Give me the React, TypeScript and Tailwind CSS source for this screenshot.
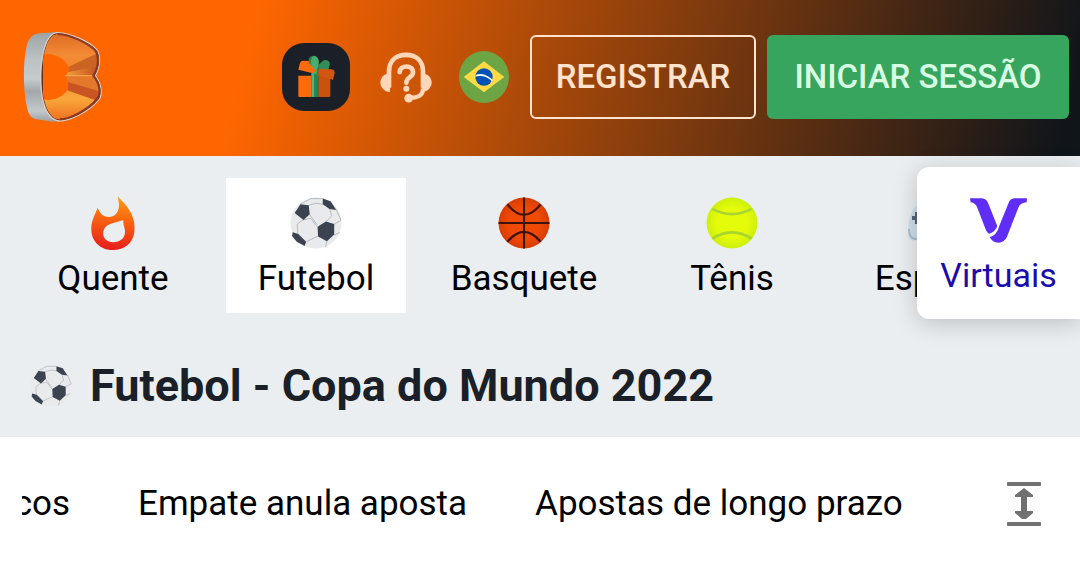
import React from 'react';

function Logo() {
  return (
    <svg viewBox="68 94 242 278" className="w-20 h-[92px]" aria-hidden="true">
      <defs>
        <linearGradient id="metal" x1="0" y1="0" x2="0" y2="1">
          <stop offset="0" stopColor="#9da2a5" />
          <stop offset="0.3" stopColor="#bcc2c4" />
          <stop offset="0.52" stopColor="#c6cccd" />
          <stop offset="0.66" stopColor="#a3a7ab" />
          <stop offset="0.88" stopColor="#c3c8ca" />
          <stop offset="1" stopColor="#9a9ea2" />
        </linearGradient>
        <linearGradient id="face" x1="0" y1="0" x2="0" y2="1">
          <stop offset="0" stopColor="#dd6a26" />
          <stop offset="0.25" stopColor="#f38a34" />
          <stop offset="0.5" stopColor="#ef862e" />
          <stop offset="0.75" stopColor="#f9a83c" />
          <stop offset="1" stopColor="#ef6f1e" />
        </linearGradient>
        <linearGradient id="edge" x1="0" y1="0" x2="1" y2="0">
          <stop offset="0" stopColor="#f39a3a" />
          <stop offset="1" stopColor="#c04c20" />
        </linearGradient>
        <clipPath id="faceClip">
          <path d="M170 103C210 104 262 128 287 150C300 165 300 203 281 228C303 252 306 282 295 298C265 335 210 360 178 362C150 360 126 320 126 240C126 160 142 106 170 103Z" />
        </clipPath>
      </defs>
      <path d="M172 97L120 101C95 104 84 116 78 145C68 190 68 270 80 325C85 348 94 358 110 361L165 369L180 340V120Z" fill="url(#metal)" />
      <path d="M172 97C215 99 270 125 292 148C307 168 303 205 289 229C307 252 312 284 300 302C268 340 212 368 177 368C144 365 120 320 120 240C120 160 138 98 172 97Z" fill="#d9cfca" />
      <path d="M171 101C212 103 265 127 289 150C303 166 301 204 285 229C304 252 308 283 297 300C266 337 210 364 178 364C148 361 124 320 124 240C124 160 142 103 171 101Z" fill="#5b2d20" />
      <g clipPath="url(#faceClip)">
        <path d="M129 100H305V364H129Z" fill="url(#face)" />
        <path d="M205 203L300 158V215L205 220Z" fill="#cb6423" />
        <path d="M203 219L300 200V228L200 229Z" fill="url(#edge)" />
        <path d="M195 230H290L310 305L203 250Z" fill="#e5792b" />
        <path d="M203 248L305 278V310L202 273Z" fill="#c95424" />
        <path d="M129 165C150 159 180 168 196 187C212 205 207 214 198 229C208 248 207 262 198 278C180 298 155 304 132 302C128 265 128 200 129 165Z" fill="#ff6600" />
      </g>
      <path d="M173 103C212 105 260 128 285 151C298 167 298 203 280 229C300 252 304 281 294 297C263 334 208 361 179 361" fill="none" stroke="#8d3823" strokeWidth="6" />
      <path d="M195 229H278" stroke="#ffc162" strokeWidth="2" />
    </svg>
  );
}

function GiftIcon() {
  return (
    <svg viewBox="0 0 204 204" className="w-[68px] h-[68px]" aria-hidden="true">
      <rect width="204" height="204" rx="66" fill="#1b1f27" />
      <path d="M49 98H88V162H52Q49 162 49 158Z" fill="#ff6b0a" />
      <path d="M109 84H145V158Q145 162 141 162H109Z" fill="#c9520c" />
      <path d="M88 86H98V162H88Z" fill="#4bb877" />
      <path d="M98 80H109V162H98Z" fill="#258650" />
      <path d="M49 80L53 63Q55 53 64 53L84 54L101 71L98 92L93 91Z" fill="#ff6b0a" />
      <path d="M80 50Q83 38 96 38Q111 42 109 60L103 75L89 68Q80 62 80 50Z" fill="#258650" />
      <path d="M96 38Q84 46 88 67L101 84L91 92L103 94L110 65Q114 42 96 38Z" fill="#49ad70" />
      <path d="M109 66L125 52Q140 48 144 63L139 80H109Z" fill="#318e59" />
      <path d="M109 77L150 79Q159 82 158 91L153 111L145 108L109 98Z" fill="#d05710" />
    </svg>
  );
}

function SupportIcon() {
  return (
    <svg viewBox="0 0 156 152" className="w-[52px] h-[51px]" fill="none" stroke="#ffd6b8" aria-hidden="true">
      <path d="M27 107V59C27 25 48 8 78 8S129 25 129 59V107" strokeWidth="14" />
      <path d="M30 63C12 64 1 77 1 91S13 119 30 120Z" fill="#ffd6b8" stroke="none" />
      <path d="M125 63C144 64 155 77 155 91S143 119 125 120Z" fill="#ffd6b8" stroke="none" />
      <path d="M129 110C129 130 115 137 88 137" strokeWidth="13" />
      <circle cx="86" cy="138" r="13" fill="#ffd6b8" stroke="none" />
      <path d="M59 60C60 38 99 37 99 60C99 77 79 73 79 92" strokeWidth="14" strokeLinecap="round" />
      <circle cx="79" cy="110" r="9" fill="#ffd6b8" stroke="none" />
    </svg>
  );
}

function BrazilFlag() {
  return (
    <svg viewBox="0 0 150 156" className="w-[50px] h-[52px]" aria-hidden="true">
      <ellipse cx="75" cy="78" rx="75" ry="78" fill="#6da544" />
      <path d="M75 31L136 78L75 124L14 78Z" fill="#ffda44" />
      <circle cx="75" cy="78" r="26" fill="#0052b4" />
      <path d="M50 71Q76 63 101 86L99 91Q77 70 49 77Z" fill="#f0f0f0" />
    </svg>
  );
}

function FireIcon() {
  return (
    <svg viewBox="0 0 132 162" className="w-11 h-[54px]" aria-hidden="true">
      <defs>
        <linearGradient id="fire" x1="0.5" y1="0" x2="0.4" y2="1">
          <stop offset="0" stopColor="#fb9a13" />
          <stop offset="0.45" stopColor="#f96210" />
          <stop offset="1" stopColor="#e61c1c" />
        </linearGradient>
      </defs>
      <path
        fillRule="evenodd"
        fill="url(#fire)"
        d="M80 0C92 16 105 23 117 46C130 68 132 90 130 108C126 142 100 162 66 162C30 162 2 138 1 101C0 76 9 63 20 35C25 48 32 58 42 61C60 68 84 58 84 27C84 18 82 9 80 0ZM97 73C78 78 54 82 43 94C29 112 38 138 65 139C88 139 103 126 102 106C102 94 96 87 97 73Z"
      />
    </svg>
  );
}

function SoccerBall({ className }: { className: string }) {
  return (
    <svg viewBox="0 0 100 100" className={className} aria-hidden="true">
      <circle cx="50" cy="50" r="49" fill="#e9eaec" />
      <g fill="none" stroke="#a9adb2" strokeWidth="1.5">
        <path d="M36 16L50 12L63 14M76 22L80 36L69 48M38 34L52 53M25 44L14 52L15 71M31 86L54 75M25 44L40 41L52 57M89 24L98 45L85 52M85 73L96 68M71 85L68 97M20 14L40 3L63 3" />
      </g>
      <g fill="#3b4350">
        <path d="M20 14L36 16L38 33L26 44L9 31Z" />
        <path d="M69 47L85 52V72L71 85L54 76L53 57Z" />
        <path d="M63 3L78 8L89 25L76 23L63 14Z" />
        <path d="M5 68L16 71L31 86L28 94L13 86L4 75Z" />
      </g>
    </svg>
  );
}

function Basketball() {
  return (
    <svg viewBox="0 0 100 100" className="w-[52px] h-[52px]" aria-hidden="true">
      <defs>
        <radialGradient id="basket">
          <stop offset="0.6" stopColor="#f04a06" />
          <stop offset="1" stopColor="#d83d05" />
        </radialGradient>
      </defs>
      <circle cx="50" cy="50" r="49" fill="url(#basket)" />
      <path d="M50 1V99M1 50H99M18 14Q50 54 82 14M18 86Q50 48 82 86" fill="none" stroke="#3b130c" strokeWidth="4" />
    </svg>
  );
}

function TennisBall() {
  return (
    <svg viewBox="0 0 100 100" className="w-[52px] h-[52px]" aria-hidden="true">
      <defs>
        <radialGradient id="tennis">
          <stop offset="0.6" stopColor="#e4fb0a" />
          <stop offset="1" stopColor="#cdf00c" />
        </radialGradient>
      </defs>
      <circle cx="50" cy="50" r="49" fill="url(#tennis)" />
      <path d="M12 23Q50 43 88 23M12 80Q50 56 88 80" fill="none" stroke="#a9d52e" strokeWidth="5" />
    </svg>
  );
}

function EsportsIcon() {
  return (
    <svg viewBox="0 0 74 40" className="w-[74px] h-10" aria-hidden="true">
      <path d="M15 1H59C69 1 73 16 73 30C73 40 63 40 55 30H19C11 40 1 40 1 30C1 16 5 1 15 1Z" fill="#cfe0ea" />
      <path d="M2 26C2 36 8 38 15 34" fill="none" stroke="#a9c0cf" strokeWidth="2" />
      <path d="M5 13H8V9H14V13H17V17H14V21H8V17H5Z" fill="#56637a" />
    </svg>
  );
}

function VirtualsIcon() {
  return (
    <svg viewBox="0 0 171 135" className="w-[57px] h-[45px]" fill="#5f2df5" aria-hidden="true">
      <path d="M0 1H36Q48 2 54 14L82 85C76 97 69 105 57 107Q51 104 48 97L22 29Q17 15 2 13Z" />
      <path d="M171 1H133Q121 2 116 14L88 83C82 104 74 113 59 117Q67 134 85 134Q104 133 111 116L145 29Q151 14 170 13Z" />
    </svg>
  );
}

function ExpandIcon() {
  return (
    <svg viewBox="0 0 34 44" className="w-[34px] h-11" fill="#717171" aria-hidden="true">
      <rect width="34" height="4" rx="1" />
      <rect y="40" width="34" height="4" rx="1" />
      <path d="M17 6L26 13V15H20V29H26V31L19 37H15L8 31V29H14V15H8V13Z" />
    </svg>
  );
}

const SPORTS = [
  { name: 'Quente', icon: <FireIcon />, width: 'w-[170px]' },
  { name: 'Futebol', icon: <SoccerBall className="w-[52px] h-[52px]" />, width: 'w-[180px]', active: true },
  { name: 'Basquete', icon: <Basketball />, width: 'w-[180px]' },
  { name: 'Tênis', icon: <TennisBall />, width: 'w-[180px]' },
  { name: 'Esportes', icon: <EsportsIcon />, width: 'w-[188px]' },
];

export default function App() {
  return (
    <div className="w-full min-h-screen bg-white text-black overflow-hidden font-['Roboto',sans-serif]">
      <header className="h-[156px] pb-0.5 pl-[23px] pr-[11px] flex items-center justify-between bg-[linear-gradient(105deg,#ff6600_23%,#10151a_98%)]">
        <a href="#" aria-label="Início">
          <Logo />
        </a>
        <div className="flex items-center">
          <button aria-label="Promoções">
            <GiftIcon />
          </button>
          <button aria-label="Ajuda" className="ml-[30px]">
            <SupportIcon />
          </button>
          <button aria-label="Idioma" className="ml-[27px]">
            <BrazilFlag />
          </button>
          <button className="ml-[21px] w-[226px] h-[84px] border-2 border-[#ffe3cd] rounded-md text-[#ffe3cd] text-[33px] font-medium">
            REGISTRAR
          </button>
          <button className="ml-[11px] w-[302px] h-[84px] bg-[#38a55f] rounded-md text-[#d8ffe2] text-[33px] font-medium whitespace-nowrap">
            INICIAR SESSÃO
          </button>
        </div>
      </header>

      <section className="bg-[#eaeef1]">
        <div className="relative pt-[22px]">
          <nav className="flex gap-7 pl-7 overflow-hidden">
            {SPORTS.map((sport) => (
              <button
                key={sport.name}
                className={`${sport.width} ${sport.active ? 'bg-white' : ''} h-[135px] shrink-0 flex flex-col items-center pt-[19px]`}
              >
                <span className="h-[52px] flex items-center">{sport.icon}</span>
                <span className="mt-2 text-[35px] leading-[44px]">{sport.name}</span>
              </button>
            ))}
          </nav>

          {/* Pinned over the end of the sports list */}
          <button className="absolute top-[11px] right-0 w-[163px] h-[152px] pt-[31px] flex flex-col items-center bg-white rounded-l-xl shadow-[0_4px_24px_rgba(0,0,0,0.2)] text-[#1a0dab]">
            <VirtualsIcon />
            <span className="mt-2.5 text-[34px] leading-[44px]">Virtuais</span>
          </button>
        </div>

        <div className="h-[124px] pl-[30px] pt-[21px] flex items-center gap-[18px]">
          <SoccerBall className="w-[42px] h-[42px]" />
          <h1 className="text-[45px] leading-[52px] font-bold text-[#1b1f27]">Futebol - Copa do Mundo 2022</h1>
        </div>
      </section>

      <div className="h-[134px] pl-[22px] pr-[39px] flex items-center justify-between">
        <nav className="flex items-center gap-[68px] text-[35px] leading-[44px] whitespace-nowrap">
          <a href="#" className="w-12 flex justify-end overflow-hidden">cos</a>
          <a href="#">Empate anula aposta</a>
          <a href="#">Apostas de longo prazo</a>
        </nav>
        <button aria-label="Expandir">
          <ExpandIcon />
        </button>
      </div>
    </div>
  );
}
